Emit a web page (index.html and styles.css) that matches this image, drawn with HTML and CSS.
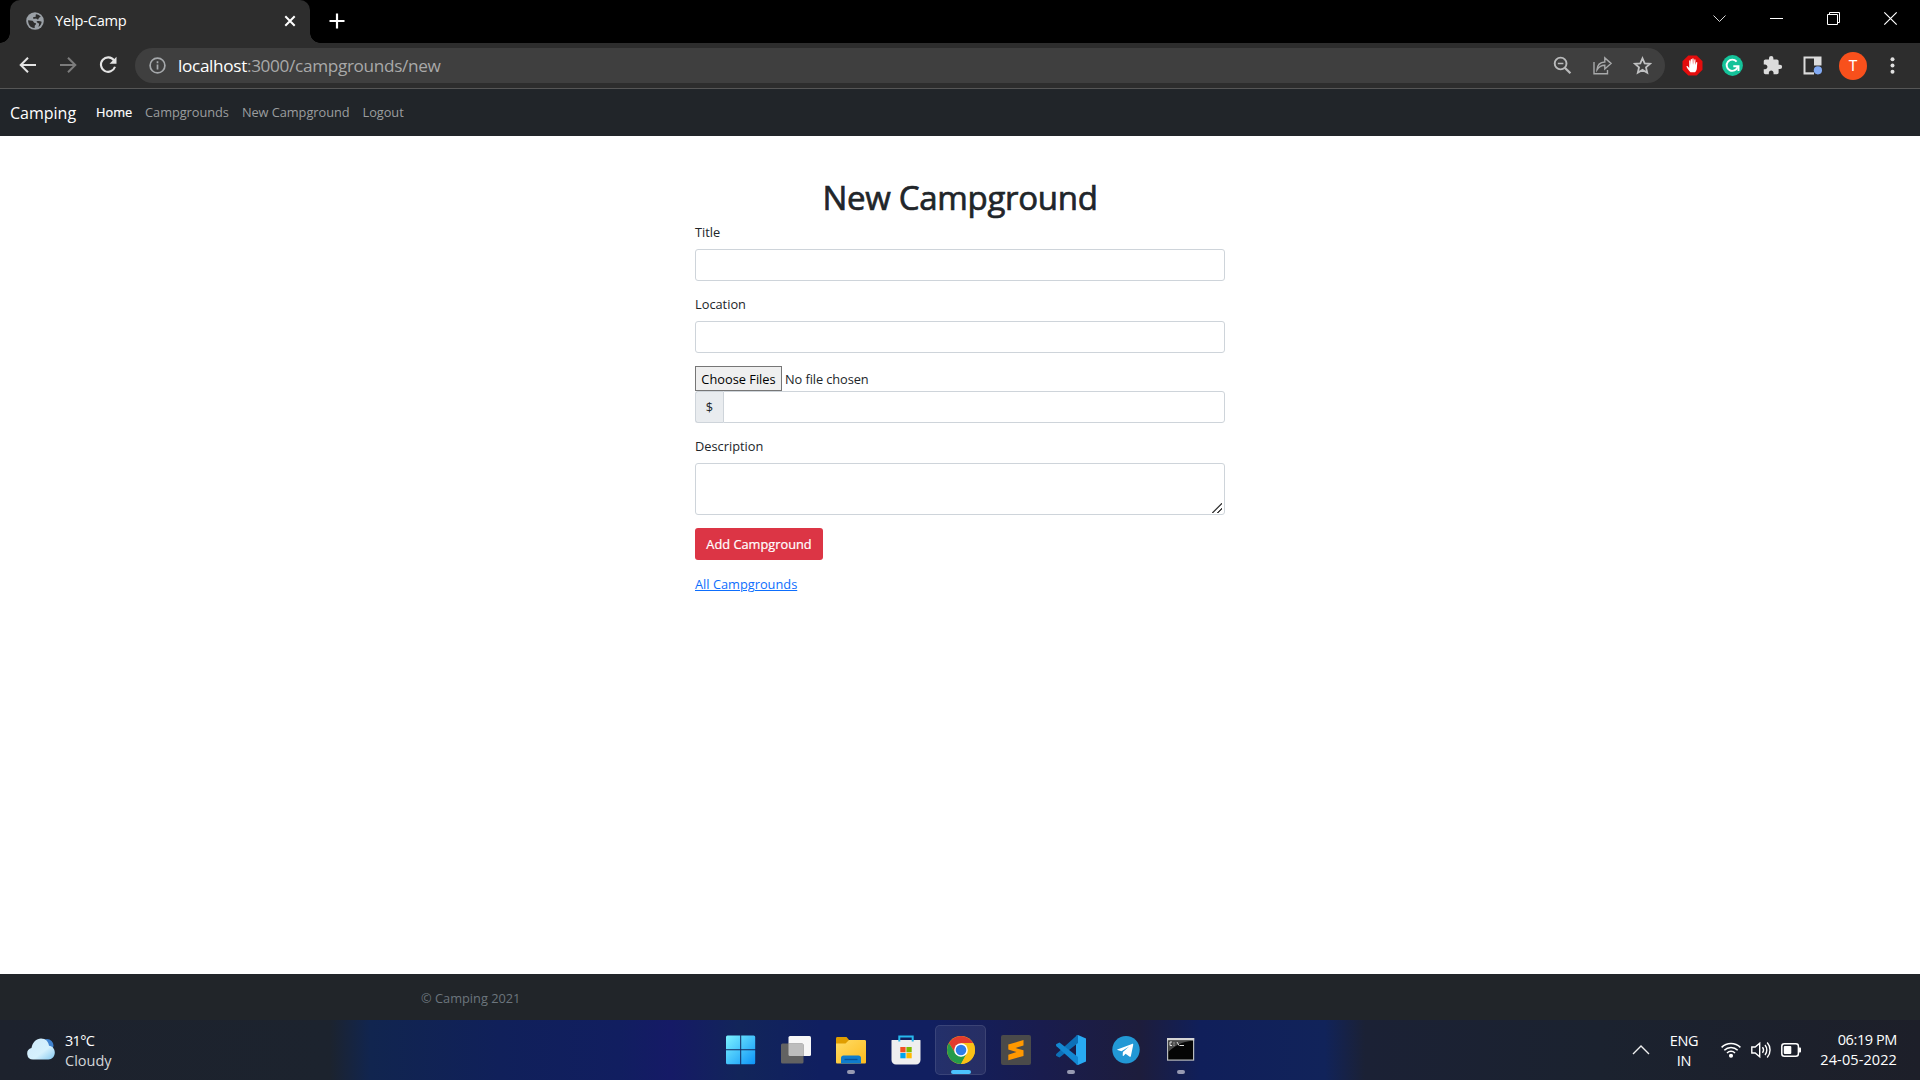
FILE: index.html
```
<!DOCTYPE html>
<html lang="en">
<head>
<meta charset="utf-8">
<title>Yelp-Camp</title>
<link rel="stylesheet" href="styles.css">
</head>
<body>
<header class="tabstrip">
  <div class="tab">
    <svg class="globe" width="18" height="18" viewBox="0 0 18 18"><circle cx="9" cy="9" r="8.800" fill="#9aa0a6"/><path d="M2.100 8.300c1.500 0 3 .3 4.300.5 1 .3 1 1.500 1.900 1.900.9.400 1.700.2 1.700 1.200 0 1-1.300 1-1.300 2.100v1.900C5 16.300 2 13 2.100 8.300zM10 2.200c1.900.2 3.600 1 4.700 2.400-.4.900-1.300.7-1.800 1.300-.5.600-.3 1.600-1.200 1.600-.9 0-.8-1-1.700-1-1 0-1.700.6-2.600.2-.7-.4-.4-1.500.4-1.700.8-.2 1.700 0 1.900-.8.1-.7-.2-1.300.3-2z" fill="#2d2d2d"/><path d="M10.500 9.500c1.500-.6 3.500-.6 5.200.2-.2 2.200-1.400 4.200-3.200 5.200.2-1.600 1-2.200.3-3.300-.6-.9-1.900-.9-2.300-2.100z" fill="#2d2d2d"/></svg>
    <span class="tab-title">Yelp-Camp</span>
    <svg class="tab-close" width="12" height="12" viewBox="0 0 12 12" stroke="#fff" stroke-width="2" fill="none"><path d="M1.300 1.300l9.400 9.400M10.700 1.300l-9.400 9.400"/></svg>
  </div>
  <svg class="new-tab" width="16" height="16" viewBox="0 0 16 16" stroke="#fff" stroke-width="2.200" fill="none"><path d="M8 .5v15M.5 8h15"/></svg>
  <div class="window-controls">
    <svg width="15" height="15" viewBox="0 0 15 15" stroke="#d8d8d8" fill="none"><path d="M1.500 4.500l6 6 6-6"/></svg>
    <svg width="15" height="15" viewBox="0 0 15 15" stroke="#fff" fill="none"><path d="M1 7.500h13"/></svg>
    <svg width="15" height="15" viewBox="0 0 15 15" stroke="#fff" fill="none"><path d="M1.500 3.500h10v10h-10zM3.500 3.500v-2h10v10h-2"/></svg>
    <svg width="15" height="15" viewBox="0 0 15 15" stroke="#fff" stroke-width="1.200" fill="none"><path d="M1.300 1.300l12.400 12.400M13.700 1.300L1.300 13.700"/></svg>
  </div>
</header>

<div class="toolbar">
  <div class="nav-buttons">
    <svg width="18" height="18" viewBox="0 0 18 18" stroke="#e4e4e4" stroke-width="2" fill="none"><path d="M17 9H2.500M9 1.700L1.700 9 9 16.300"/></svg>
    <svg width="18" height="18" viewBox="0 0 18 18" stroke="#7c7c7c" stroke-width="2" fill="none"><path d="M1 9h14.500M9 1.700L16.300 9 9 16.300"/></svg>
    <svg width="18" height="18" viewBox="0 0 18 18" fill="none"><path d="M15 4.400A7.200 7.200 0 1 0 16 10.800" stroke="#e4e4e4" stroke-width="2.100"/><path d="M17.500.8v7h-7z" fill="#e4e4e4"/></svg>
  </div>
  <div class="omnibox">
    <svg width="17" height="17" viewBox="0 0 17 17" fill="none" stroke="#a5a8ab" stroke-width="1.700"><circle cx="8.500" cy="8.500" r="7.400"/><path d="M8.500 7.500v5M8.500 4.300v1.900"/></svg>
    <span class="url"><span class="host">localhost</span>:3000/campgrounds/new</span>
    <div class="omnibox-actions">
      <svg width="19" height="19" viewBox="0 0 19 19" fill="none" stroke="#b9babb"><circle cx="7.600" cy="7.500" r="5.900" stroke-width="1.900"/><path d="M4.800 7.500h5.600" stroke-width="1.500"/><path d="M11.800 11.700l5.600 5.600" stroke-width="2.300"/></svg>
      <svg width="19" height="19" viewBox="0 0 19 19" fill="none" stroke="#a8a9aa" stroke-width="1.400"><path d="M1 6v11.700h13.500V14M4 13.800c.3-4.800 3-7.500 7.800-7.800V1.900L18 7.400l-6.200 5.500V9.300c-3.400 0-5.700 1.300-7.800 4.500z"/></svg>
      <svg width="19" height="19" viewBox="0 0 19 19" fill="none" stroke="#c0c1c2" stroke-width="1.800"><path d="M9.500 2.300l2.200 5 5.300.5-4 3.600 1.200 5.300-4.700-2.800-4.700 2.800L6 11.400 2 7.800l5.300-.5z"/></svg>
    </div>
  </div>
  <div class="extensions">
    <svg width="21" height="21" viewBox="0 0 21 21"><path d="M6.300.5h8.400l5.800 5.800v8.400l-5.800 5.800H6.300L.5 14.700V6.300z" fill="#e40d0d"/><path d="M8.500 17.300c-1.600-1.300-2.800-3.300-3.900-5.200-.5-1 .7-1.400 1.300-.7l1.300 1.500V6c0-.9 1.200-.9 1.200 0l.3 4V4.600c0-.9 1.300-.9 1.300 0l.3 5.200V4c0-.9 1.300-.9 1.300 0l.2 5.800.5-5c0-.9 1.300-.8 1.200 0L13.300 10l.8-2.500c.3-.9 1.300-.6 1.200.2-.3 1.900-.2 3.500-.4 5.300-.2 2-.8 3.400-1.900 4.300z" fill="#fff"/></svg>
    <svg width="21" height="21" viewBox="0 0 21 21"><circle cx="10.500" cy="10.500" r="10.400" fill="#15c39a"/><path d="M14.600 6.700A5.600 5.600 0 1 0 15.600 12" fill="none" stroke="#fff" stroke-width="1.900"/><path d="M11.300 11.200h5.200v4.700" fill="none" stroke="#fff" stroke-width="1.900"/></svg>
    <svg width="21" height="21" viewBox="0 0 24 24" fill="#dcdcdc"><path d="M20.500 11H19V7c0-1.100-.9-2-2-2h-4V3.500a2.500 2.500 0 0 0-5 0V5H4c-1.100 0-1.990.9-1.990 2v3.800H3.500c1.490 0 2.700 1.210 2.700 2.700s-1.210 2.700-2.700 2.700H2V20c0 1.100.9 2 2 2h3.800v-1.500c0-1.490 1.210-2.700 2.700-2.700 1.490 0 2.700 1.210 2.700 2.700V22H17c1.100 0 2-.9 2-2v-4h1.500a2.500 2.500 0 0 0 0-5z"/></svg>
    <svg width="21" height="21" viewBox="0 0 21 21"><path d="M1.500 1.500h18v18h-18z" fill="#dcdcdc"/><path d="M3.500 3.500h8.500v13.800H3.500z" fill="#2d2d2d"/><path d="M12 10.500h9v10h-9z" fill="#2d2d2d"/><circle cx="15.900" cy="15.300" r="4.100" fill="#82aaf4"/></svg>
    <span class="avatar">T</span>
    <svg width="21" height="21" viewBox="0 0 21 21" fill="#e0e0e0"><circle cx="10.500" cy="4.200" r="2"/><circle cx="10.500" cy="10.500" r="2"/><circle cx="10.500" cy="16.800" r="2"/></svg>
  </div>
</div>

<div class="page">
  <nav class="navbar">
    <a class="brand">Camping</a>
    <a class="nav-link active">Home</a>
    <a class="nav-link">Campgrounds</a>
    <a class="nav-link">New Campground</a>
    <a class="nav-link">Logout</a>
  </nav>
  <main class="content">
    <h1>New Campground</h1>
    <form class="campground-form">
      <label for="title">Title</label>
      <input class="control" type="text" id="title">
      <label for="location">Location</label>
      <input class="control location" type="text" id="location">
      <input class="file" type="file" multiple>
      <div class="input-group">
        <span class="prefix">$</span>
        <input class="control" type="text">
      </div>
      <label for="description">Description</label>
      <textarea class="control" id="description"></textarea>
      <button class="submit" type="button">Add Campground</button>
      <a class="back" href="#">All Campgrounds</a>
    </form>
  </main>
  <footer class="footer"><span>© Camping 2021</span></footer>
</div>

<div class="taskbar">
  <div class="weather">
    <svg width="28" height="22" viewBox="0 0 28 22"><defs><linearGradient id="cloud" x1="0" y1="0" x2="1" y2="1"><stop offset="0" stop-color="#cfeafb"/><stop offset=".6" stop-color="#d5f1fd"/><stop offset="1" stop-color="#82c7ef"/></linearGradient></defs><circle cx="20" cy="7.500" r="6.500" fill="#3f82cf"/><path d="M6 21.500a5.800 5.800 0 0 1-1.500-11.400C5.500 4 9.500.5 14 .5c4.700 0 7.500 3.200 8 7.300 3.500.3 5.800 3.300 5.800 6.700 0 4-2.800 7-6.300 7z" fill="url(#cloud)"/></svg>
    <div class="weather-text"><span class="temp">31°C</span><span class="sky">Cloudy</span></div>
  </div>
  <div class="apps">
    <div class="app"><svg width="30" height="30" viewBox="0 0 30 30"><defs><linearGradient id="win" gradientUnits="userSpaceOnUse" x1="0" y1="0" x2="30" y2="30"><stop offset="0" stop-color="#7df3ff"/><stop offset="1" stop-color="#0a91f7"/></linearGradient></defs><path d="M1.500.5h12.700v13.700H0V2A1.500 1.500 0 0 1 1.500.5zM15.200.5h12.500A1.500 1.500 0 0 1 29.200 2v12.200h-14zM0 15.300h14.200v14H1.500A1.500 1.500 0 0 1 0 27.800zM15.200 15.300h14v12.500a1.500 1.500 0 0 1-1.500 1.500H15.200z" fill="url(#win)"/></svg></div>
    <div class="app"><svg width="30" height="30" viewBox="0 0 30 30"><rect x="7.500" y="1" width="22.500" height="20" rx="1.500" fill="#f7f7f7"/><rect x="0" y="8.500" width="22.500" height="20" rx="1.500" fill="#626262"/><path d="M7.500 8.500H21a1.500 1.500 0 0 1 1.500 1.500v11H9a1.500 1.500 0 0 1-1.500-1.500z" fill="#bdbdbd"/></svg></div>
    <div class="app running"><svg width="30" height="30" viewBox="0 0 30 30"><defs><linearGradient id="fold" x1="0" y1="0" x2="1" y2="1"><stop offset="0" stop-color="#ffdc66"/><stop offset="1" stop-color="#fdbb1d"/></linearGradient></defs><path d="M0 3.500C0 2.500.5 2 1.500 2h9l3 3.500V9H0z" fill="#e09d00"/><path d="M0 8.500h9.500L13 5h15.500c1 0 1.500.5 1.500 1.500V27c0 1-.5 1.500-1.500 1.500h-27C.5 28.500 0 28 0 27z" fill="url(#fold)"/><path d="M5 28.500V23c0-1.500 1-2.500 2.500-2.500h15c1.500 0 2.500 1 2.500 2.500v5.500z" fill="#0f7ccc"/><path d="M8.500 24.500h13" stroke="#08529a" stroke-width="1.300"/></svg></div>
    <div class="app"><svg width="30" height="30" viewBox="0 0 30 30"><path d="M.5 5.500C.5 5 1 5 1.500 5h27c.5 0 1 0 1 .5V25a4.500 4.500 0 0 1-4.500 4.500H5A4.500 4.500 0 0 1 .5 25z" fill="#efefef"/><path d="M8.300 6.500V1.500h13.400v5" stroke="#26b8ee" stroke-width="2" fill="none"/><path d="M9.300 12h5.300v5.300H9.300z" fill="#f25022"/><path d="M15.400 12h5.300v5.300h-5.300z" fill="#7fba00"/><path d="M9.300 18h5.300v5.300H9.300z" fill="#00a4ef"/><path d="M15.400 18h5.300v5.300h-5.300z" fill="#ffb900"/></svg></div>
    <div class="app current"><svg width="30" height="30" viewBox="-15 -15 30 30"><circle r="14" fill="#fbc116"/><path d="M-12.120-7A14 14 0 0 1 12.120-7L6.500-6.500H0L-5.630 3.250z" fill="#e33b2e"/><path d="M-12.120-7A14 14 0 0 0 0 14L5.630 3.250 0 6.500l-5.630-3.250z" fill="#259b4a"/><path d="M0-7h12.120A14 14 0 0 1 0 14L6 3.500z" fill="#fbc116"/><circle r="6.800" fill="#fff"/><circle r="5.300" fill="#2f7de9"/></svg></div>
    <div class="app"><svg width="30" height="30" viewBox="0 0 30 30"><rect width="30" height="30" rx="2" fill="#4a4a4a"/><path d="M7.300 9.500L22.500 5v5.500L14.500 13l8 2.300V21L7.300 25.300v-5.600L15.500 17l-8.200-2.500z" fill="#ff9800"/></svg></div>
    <div class="app running"><svg width="30" height="30" viewBox="0 0 30 30"><path d="M22 0l8 3.500v23L22 30l-2-1V1z" fill="#28a9f2"/><path d="M22 8L3.500 22.500.5 21c-.7-.5-.7-1.500 0-2.200L21 .3C21.500 0 22 0 22 0z" fill="#0d70b8"/><path d="M22 22L3.500 7.500.5 9c-.7.500-.7 1.500 0 2.200L21 29.700c.5.300 1 .3 1 .3z" fill="#1388d3"/></svg></div>
    <div class="app"><svg width="30" height="30" viewBox="0 0 30 30"><circle cx="15" cy="14.800" r="13.700" fill="#2298d5"/><path d="M6.300 14.600L21 8.900c.9-.3 1.400.2 1.200 1.100l-2.300 11c-.2.900-.8 1.100-1.500.6l-3.800-2.800-2 1.900c-.5.400-.9.200-.9-.4l.2-3.200 6.200-5.600-7.600 4.700-4-1.200c-.6-.2-.6-.3-.2-.4z" fill="#fff"/></svg></div>
    <div class="app running"><svg width="30" height="30" viewBox="0 0 30 30"><rect x="1.600" y="3.600" width="26" height="21.500" fill="#050505" stroke="#b9bcbf" stroke-width="1.200"/><path d="M1 3h27.200v2.500H1z" fill="#d5d5d5"/><path d="M2.200 5.500h24.700C15 7 10 10 2.200 17z" fill="#4a4a4a"/><path d="M6 7H4v3.500h2M8 7.500v1M8 9.700v1M11 7l2 3.500M13.500 10.500H18" stroke="#ddd" fill="none"/></svg></div>
  </div>
  <div class="tray">
    <svg class="more" width="18" height="12" viewBox="0 0 18 12" fill="none" stroke="#f0f0f0" stroke-width="1.400"><path d="M1 10l8-8 8 8"/></svg>
    <div class="lang"><span>ENG</span><span>IN</span></div>
    <svg width="20" height="18" viewBox="0 0 20 18" fill="none" stroke="#fff" stroke-width="1.500"><path d="M.6 6.400a13.300 13.300 0 0 1 18.800 0M3.300 9.200a9.500 9.500 0 0 1 13.400 0M6 12a5.700 5.700 0 0 1 8 0"/><circle cx="10" cy="14.800" r="1.300" fill="#fff"/></svg>
    <svg width="20" height="18" viewBox="0 0 20 18" fill="none" stroke="#fff" stroke-width="1.400"><path d="M.8 6h3.400l4.500-3.700v13.400L4.200 12H.8zM11.500 6.200c1.200 1.600 1.200 4 0 5.600M14 4c2.400 2.800 2.400 7.200 0 10M16.200 1.500c3.800 4.200 3.800 10.800 0 15"/></svg>
    <svg width="21" height="18" viewBox="0 0 21 18" fill="none"><rect x=".8" y="2.800" width="16.600" height="12.400" rx="2.500" stroke="#fff" stroke-width="1.500"/><rect x="2.800" y="4.900" width="7.500" height="8.200" rx="1" fill="#fff"/><path d="M18 6.500h1c.6 0 1 .5 1 1v3c0 .5-.4 1-1 1h-1z" fill="#fff"/></svg>
    <div class="clock"><span class="time">06:19 PM</span><span class="date">24-05-2022</span></div>
  </div>
</div>
</body>
</html>
```
FILE: styles.css
```
* { box-sizing: border-box; }
body {
  margin: 0;
  width: 1920px;
  height: 1080px;
  display: flex;
  flex-direction: column;
  overflow: hidden;
  font-family: "Open Sans", "Noto Sans", sans-serif;
  font-size: 12.8px;
  color: #212529;
  background: #fff;
}
svg { display: block; flex: none; }

/* Browser window */
.tabstrip {
  flex: none;
  height: 43px;
  display: flex;
  align-items: flex-start;
  padding-left: 10px;
  background: #000;
}
.tab {
  position: relative;
  width: 300px;
  height: 43px;
  display: flex;
  align-items: center;
  padding: 0 14px 1px 16px;
  border-radius: 10px 10px 0 0;
  background: #2d2d2d;
}
.tab::before, .tab::after {
  content: "";
  position: absolute;
  bottom: 0;
  width: 10px;
  height: 10px;
}
.tab::before { left: -10px; background: radial-gradient(circle at 0 0, transparent 9.5px, #2d2d2d 10px); }
.tab::after { right: -10px; background: radial-gradient(circle at 100% 0, transparent 9.5px, #2d2d2d 10px); }
.tab-title {
  margin: -3px 0 0 11px;
  flex: 1;
  color: #fff;
  font-size: 14.6px;
  letter-spacing: -.2px;
}
.new-tab { margin: 13px 0 0 19px; }
.window-controls { display: flex; gap: 42px; margin: 11px 22px 0 auto; }
.toolbar {
  flex: none;
  height: 46px;
  display: flex;
  align-items: flex-start;
  padding: 5px 17px 0 19px;
  background: #2d2d2d;
  border-bottom: 1px solid #565656;
}
.nav-buttons {
  display: flex;
  gap: 22px;
  width: 116px;
  padding-top: 8px;
}
.omnibox {
  width: 1530px;
  height: 35px;
  display: flex;
  align-items: center;
  padding: 0 13px 0 14px;
  border-radius: 18px;
  background: #3f3f3f;
}
.url {
  margin: -1px 0 0 12px;
  flex: 1;
  color: #a9a9a9;
  font-size: 17.2px;
  letter-spacing: -.34px;
}
.host { color: #fff; }
.omnibox-actions { display: flex; gap: 21px; }
.extensions { display: flex; align-items: center; gap: 19px; height: 35px; margin-left: 17px; }
.avatar {
  width: 28px;
  height: 28px;
  margin: 0 -4px 0 -3px;
  border-radius: 50%;
  background: #f8501c;
  color: #fff;
  font: 15px/28px Roboto, sans-serif;
  text-align: center;
}

/* Web page */
.page { flex: 1; display: flex; flex-direction: column; }
.navbar {
  height: 47px;
  display: flex;
  align-items: center;
  padding-left: 10px;
  background: #212529;
  color: #9b9d9f;
}
.brand { margin-right: 20px; color: #fff; font-size: 16px; }
.nav-link { margin: 0 13px 2px 0; letter-spacing: -.05px; }
.nav-link.active { color: #fff; -webkit-text-stroke: .2px #fff; }
.content { flex: 1; display: flex; flex-direction: column; align-items: center; padding-top: 42px; }
h1 {
  margin: 0 0 6px;
  font-size: 33px;
  line-height: 39px;
  font-weight: 400;
  letter-spacing: -.3px;
  -webkit-text-stroke: .7px #212529;
}
.campground-form {
  width: 530px;
  display: flex;
  flex-direction: column;
  align-items: stretch;
}
label { height: 20px; line-height: 19px; margin-bottom: 6px; }
.control {
  width: 100%;
  height: 32px;
  margin: 0 0 14px;
  padding: 5px 10px;
  border: 1px solid #ced4da;
  border-radius: 3px;
  background: #fff;
  font: inherit;
}
.control.location { margin-bottom: 13px; }
.file { height: 25px; font: inherit; line-height: 25px; letter-spacing: -.08px; }
.file::file-selector-button {
  width: 87px;
  height: 25px;
  margin: 0 3px 0 0;
  padding: 0;
  border: 1px solid #767676;
  border-radius: 0;
  background: #efefef;
  color: #000;
  font: inherit;
}
.input-group { display: flex; margin-bottom: 14px; }
.prefix {
  width: 28px;
  height: 32px;
  border: 1px solid #ced4da;
  border-right: 0;
  border-radius: 3px 0 0 3px;
  background: #e9ecef;
  line-height: 30px;
  text-align: center;
}
.input-group .control { flex: 1; margin: 0; border-radius: 0 3px 3px 0; }
textarea.control { height: 52px; margin-bottom: 13px; resize: vertical; }
textarea.control::-webkit-resizer {
  background: linear-gradient(135deg, transparent 6.3px, #444 6.7px 7.7px, transparent 8.1px 9.900px, #444 10.300px 11.300px, transparent 11.700px) 3px 4px / 10px 10px no-repeat;
}
.submit {
  align-self: flex-start;
  width: 128px;
  height: 32px;
  margin-bottom: 14px;
  padding: 0;
  border: 0;
  border-radius: 3px;
  background: #dc3545;
  color: #fff;
  font: inherit;
  -webkit-text-stroke: .2px #fff;
}
.back { align-self: flex-start; line-height: 20px; color: #0d6efd; }
.footer {
  height: 46px;
  padding: 15px 0 0 421px;
  background: #212529;
  color: #6c757d;
}

/* Desktop taskbar */
.taskbar {
  flex: none;
  height: 60px;
  display: grid;
  grid-template-columns: 713px 495px 1fr;
  background: linear-gradient(90deg, #1d222d 0, #1c232e 330px, #11254f 370px, #10205a 500px, #111e60 620px, #151a66 670px, #12255a 740px, #101f60 820px, #111f60 930px, #191c4e 1040px, #1d1d3c 1140px, #101f5a 1200px, #11235a 1325px, #1b2135 1365px, #1b222f 1600px, #1d1f29 1920px);
  color: #fff;
  font-size: 14.5px;
  line-height: 20px;
}
.weather { display: flex; padding: 18px 0 0 27px; gap: 10px; }
.weather-text { display: flex; flex-direction: column; margin-top: -7px; }
.temp { letter-spacing: -.7px; }
.sky { color: #d3d5d8; }
.apps { display: flex; }
.app {
  position: relative;
  width: 55px;
  display: flex;
  justify-content: center;
  align-items: center;
}
.app svg { position: relative; }
.app.current::before {
  content: "";
  position: absolute;
  inset: 5px 2px;
  border: 1px solid #ffffff1a;
  border-radius: 5px;
  background: #ffffff14;
}
.app.running::after, .app.current::after {
  content: "";
  position: absolute;
  bottom: 6px;
  width: 8px;
  height: 4px;
  border-radius: 2px;
  background: #979ab2;
}
.app.current::after { width: 20px; background: #4cc2ff; }
.tray { display: flex; align-items: center; justify-content: flex-end; padding-right: 23px; }
.more { margin-right: 20px; }
.lang { display: flex; flex-direction: column; align-items: center; margin: 2px 23px 0 0; letter-spacing: -.3px; }
.tray svg + svg { margin-left: 10px; }
.clock { display: flex; flex-direction: column; align-items: flex-end; margin-left: 18px; }
.time { letter-spacing: -.4px; }
.date { letter-spacing: .1px; }
```
